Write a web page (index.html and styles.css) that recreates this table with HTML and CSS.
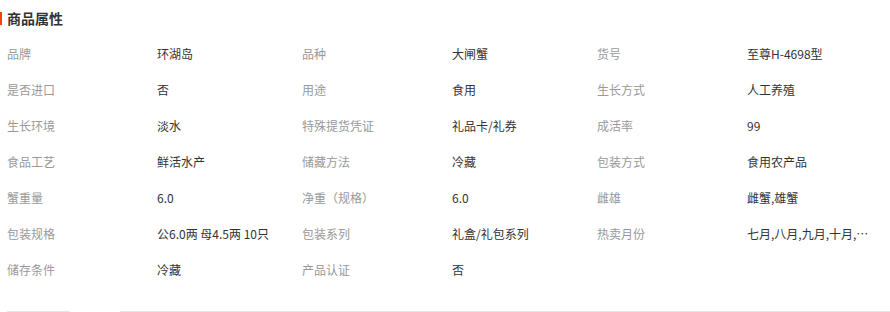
FILE: index.html
```html
<!DOCTYPE html>
<html lang="zh-CN">
<head>
<meta charset="utf-8">
<title>商品属性</title>
<link rel="stylesheet" href="styles.css">
</head>
<body>
<div class="attrs">
  <h3 class="title">商品属性</h3>
  <div class="grid">
    <span class="k">品牌</span><span class="v">环湖岛</span>
    <span class="k">品种</span><span class="v">大闸蟹</span>
    <span class="k">货号</span><span class="v">至尊H-4698型</span>

    <span class="k">是否进口</span><span class="v">否</span>
    <span class="k">用途</span><span class="v">食用</span>
    <span class="k">生长方式</span><span class="v">人工养殖</span>

    <span class="k">生长环境</span><span class="v">淡水</span>
    <span class="k">特殊提货凭证</span><span class="v">礼品卡/礼券</span>
    <span class="k">成活率</span><span class="v">99</span>

    <span class="k">食品工艺</span><span class="v">鲜活水产</span>
    <span class="k">储藏方法</span><span class="v">冷藏</span>
    <span class="k">包装方式</span><span class="v">食用农产品</span>

    <span class="k">蟹重量</span><span class="v">6.0</span>
    <span class="k">净重（规格）</span><span class="v">6.0</span>
    <span class="k">雌雄</span><span class="v">雌蟹,雄蟹</span>

    <span class="k">包装规格</span><span class="v">公6.0两 母4.5两 10只</span>
    <span class="k">包装系列</span><span class="v">礼盒/礼包系列</span>
    <span class="k">热卖月份</span><span class="v">七月,八月,九月,十月,…</span>

    <span class="k">储存条件</span><span class="v">冷藏</span>
    <span class="k">产品认证</span><span class="v">否</span>
  </div>
  <div class="tabs">
    <span class="tab tab-a"></span>
    <span class="tab tab-b"></span>
  </div>
</div>
</body>
</html>
```

FILE: styles.css
```css
* { box-sizing: border-box; }
html, body {
  margin: 0;
  padding: 0;
  background: #fff;
}
body {
  font-family: "Microsoft YaHei", "Noto Sans CJK SC", "Noto Sans", sans-serif;
  font-size: 12px;
  color: #333;
  width: 890px;
  height: 312px;
  overflow: hidden;
}
.attrs {
  display: flex;
  flex-direction: column;
}
.title {
  margin: 12px 0 0 0;
  height: 13px;
  line-height: 13px;
  padding-left: 5px;
  border-left: 2px solid #ff4000;
  font-size: 14px;
  font-weight: bold;
  color: #333;
}
.grid {
  margin-top: 11px;
  padding-left: 7px;
  display: grid;
  grid-template-columns: 150px 145px 150px 145px 150px 130px;
  grid-auto-rows: 36px;
}
.k, .v {
  line-height: 36px;
  white-space: nowrap;
}
.k { color: #999; }
.v { color: #333; }
.tabs {
  margin-top: 23px;
  display: flex;
  padding-left: 7px;
}
.tab {
  height: 1px;
  background: #e5e5e5;
}
.tab-a { width: 63px; }
.tab-b { flex: 1; margin-left: 50px; }
```
